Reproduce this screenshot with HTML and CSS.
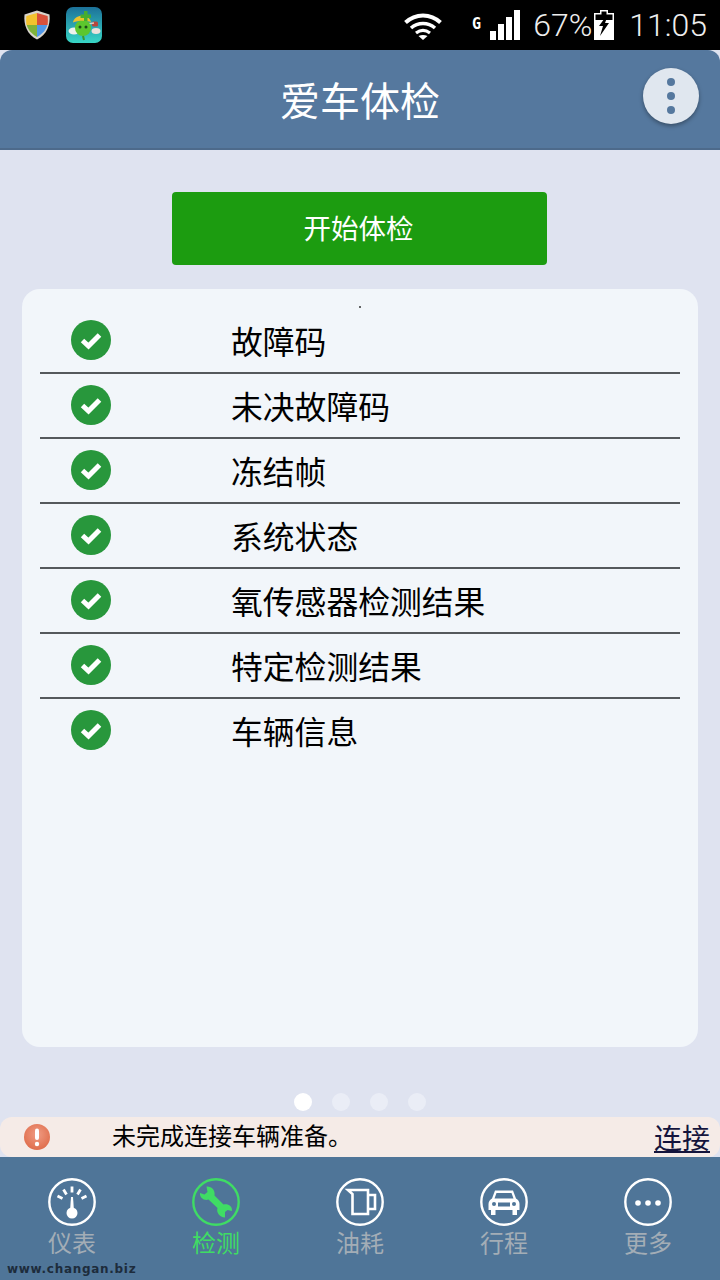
FILE: index.html
```html
<!DOCTYPE html>
<html lang="zh-CN">
<head>
    <meta charset="UTF-8">
    <meta name="viewport" content="width=device-width, initial-scale=1.0">
    <title>爱车体检</title>
    <link rel="stylesheet" href="styles.css">
</head>
<body>
    <div class="phone">
        <div class="status-bar">
            <svg class="shield" width="28" height="30" viewBox="0 0 28 30">
                <path d="M14 0.5 L26.5 4.5 C27.5 15 24 24.5 14 29.5 C4 24.5 0.5 15 1.5 4.5 Z" fill="#d8d4cc"/>
                <path d="M14 3 V15 H3.4 C3 12 3 9 3.4 6 Z" fill="#f3c22e"/>
                <path d="M14 3 V15 H24.6 C25 12 25 9 24.6 6 Z" fill="#d9503a"/>
                <path d="M14 15 V27 C8 23.5 4.8 19.5 3.8 15 Z" fill="#7fb23a"/>
                <path d="M14 15 V27 C20 23.5 23.2 19.5 24.2 15 Z" fill="#4f97e8"/>
            </svg>
            <svg class="app-icon" width="36" height="36" viewBox="0 0 36 36">
                <defs>
                    <linearGradient id="appBg" x1="0" y1="0" x2="0" y2="1">
                        <stop offset="0" stop-color="#1c7199"/>
                        <stop offset="1" stop-color="#38d6c6"/>
                    </linearGradient>
                </defs>
                <rect width="36" height="36" rx="7" fill="url(#appBg)"/>
                <ellipse cx="8" cy="24" rx="5.5" ry="3.5" fill="#eef2ec"/>
                <ellipse cx="30" cy="24" rx="4.5" ry="3" fill="#ece2dc"/>
                <rect x="26" y="14.5" width="6" height="5" rx="1.5" fill="#b8453c"/>
                <path d="M21 17 L28 16" stroke="#d8d0c0" stroke-width="1.5"/>
                <circle cx="17" cy="21" r="8" fill="#5cc62e"/>
                <path d="M17 29 L18 33" stroke="#3c9a2a" stroke-width="2"/>
                <path d="M7 15.5 C8 7 23 6 25 15 C19 13 12 13.5 7 15.5 Z" fill="#ecc22c"/>
                <path d="M18 4 h3.5 v3.5 h3.5 v3.5 h-3.5 v3 h-3.5 v-3 h-3.5 v-3.5 h3.5 Z" fill="#46ad2e"/>
                <circle cx="14" cy="20" r="1.5" fill="#1c4a18"/>
                <circle cx="20" cy="20" r="1.5" fill="#1c4a18"/>
            </svg>
            <div class="status-right">
                <svg class="wifi" width="38" height="27" viewBox="0 0 38 27">
                    <path d="M1.5 9.5 C11.5 0 26.5 0 36.5 9.5" fill="none" stroke="#fff" stroke-width="4"/>
                    <path d="M7 15 C14 9 24 9 31 15" fill="none" stroke="#fff" stroke-width="3.6"/>
                    <path d="M12 20 C16.5 16.5 21.5 16.5 26 20" fill="none" stroke="#fff" stroke-width="3.2"/>
                    <path d="M14.5 23 L19 27 L23.5 23 C20.5 21.5 17.5 21.5 14.5 23 Z" fill="#fff"/>
                </svg>
                <span class="net-type">G</span>
                <div class="signal">
                    <i class="s1"></i><i class="s2"></i><i class="s3"></i><i class="s4"></i>
                </div>
                <span class="battery-text">67%</span>
                <svg class="battery" width="20" height="30" viewBox="0 0 20 30">
                    <path d="M6 0 H14 V3 H20 V30 H0 V3 H6 Z M7.5 1.5 V4.5 H1.5 V10 H18.5 V4.5 H12.5 V1.5 Z" fill="#fff" fill-rule="evenodd"/>
                    <path d="M13 5 L5 16 H9 L6 26 L15 13 H11 L14 5 Z" fill="#000"/>
                </svg>
                <span class="clock">11:05</span>
            </div>
        </div>

        <header class="title-bar">
            <h1>爱车体检</h1>
            <div class="menu-btn"><i></i><i></i><i></i></div>
        </header>

        <main class="content">
            <div class="start-row">
                <button class="start-btn" type="button">开始体检</button>
            </div>
            <div class="check-card">
                <i class="speck"></i>
                <div class="check-item"><span class="check"><svg width="40" height="40" viewBox="0 0 40 40"><circle cx="20" cy="20" r="20" fill="#28973c"/><path d="M11.5 20.5 L17.5 26 L28.5 15" fill="none" stroke="#fff" stroke-width="5"/></svg></span><span class="check-label">故障码</span></div>
                <div class="check-item"><span class="check"><svg width="40" height="40" viewBox="0 0 40 40"><circle cx="20" cy="20" r="20" fill="#28973c"/><path d="M11.5 20.5 L17.5 26 L28.5 15" fill="none" stroke="#fff" stroke-width="5"/></svg></span><span class="check-label">未决故障码</span></div>
                <div class="check-item"><span class="check"><svg width="40" height="40" viewBox="0 0 40 40"><circle cx="20" cy="20" r="20" fill="#28973c"/><path d="M11.5 20.5 L17.5 26 L28.5 15" fill="none" stroke="#fff" stroke-width="5"/></svg></span><span class="check-label">冻结帧</span></div>
                <div class="check-item"><span class="check"><svg width="40" height="40" viewBox="0 0 40 40"><circle cx="20" cy="20" r="20" fill="#28973c"/><path d="M11.5 20.5 L17.5 26 L28.5 15" fill="none" stroke="#fff" stroke-width="5"/></svg></span><span class="check-label">系统状态</span></div>
                <div class="check-item"><span class="check"><svg width="40" height="40" viewBox="0 0 40 40"><circle cx="20" cy="20" r="20" fill="#28973c"/><path d="M11.5 20.5 L17.5 26 L28.5 15" fill="none" stroke="#fff" stroke-width="5"/></svg></span><span class="check-label">氧传感器检测结果</span></div>
                <div class="check-item"><span class="check"><svg width="40" height="40" viewBox="0 0 40 40"><circle cx="20" cy="20" r="20" fill="#28973c"/><path d="M11.5 20.5 L17.5 26 L28.5 15" fill="none" stroke="#fff" stroke-width="5"/></svg></span><span class="check-label">特定检测结果</span></div>
                <div class="check-item last"><span class="check"><svg width="40" height="40" viewBox="0 0 40 40"><circle cx="20" cy="20" r="20" fill="#28973c"/><path d="M11.5 20.5 L17.5 26 L28.5 15" fill="none" stroke="#fff" stroke-width="5"/></svg></span><span class="check-label">车辆信息</span></div>
            </div>
            <div class="pager">
                <i class="active"></i><i></i><i></i><i></i>
            </div>
        </main>

        <div class="notice">
            <svg class="notice-icon" width="26" height="26" viewBox="0 0 26 26">
                <defs>
                    <radialGradient id="noticeBg" cx="0.5" cy="0.4" r="0.65">
                        <stop offset="0" stop-color="#f09c84"/>
                        <stop offset="1" stop-color="#de6a48"/>
                    </radialGradient>
                </defs>
                <circle cx="13" cy="13" r="13" fill="url(#noticeBg)"/>
                <rect x="11" y="4.5" width="4" height="11.5" rx="2" fill="#fff"/>
                <circle cx="13" cy="20" r="2.2" fill="#fff"/>
            </svg>
            <span class="notice-text">未完成连接车辆准备。</span>
            <a class="notice-link">连接</a>
        </div>

        <nav class="tab-bar">
            <div class="tab">
                <svg width="48" height="48" viewBox="0 0 48 48" fill="none" stroke="#fff">
                    <circle cx="24" cy="24" r="22.7" stroke-width="2.4"/>
                    <path d="M9.5 18 L14.5 20.5 M15.5 11.5 L18.5 16.5 M24 8.5 V14.5 M32.5 11.5 L29.5 16.5 M38.5 18 L33.5 20.5" stroke-width="2.8"/>
                    <path d="M23 19 H25 L26 33 H22 Z" fill="#fff" stroke="none"/>
                    <circle cx="24" cy="35" r="5.5" fill="#fff" stroke="none"/>
                </svg>
                <span>仪表</span>
            </div>
            <div class="tab active">
                <svg width="48" height="48" viewBox="0 0 48 48" fill="none" stroke="#3fdc64">
                    <circle cx="24" cy="24" r="22.7" stroke-width="2.4"/>
                    <path d="M14.5 8.5 C19.5 8 23.5 12 22.5 17.5 L31.5 26.5 C36 25.5 40.5 28 40 33 L35.5 32 L33 34 L33 39.5 C27.5 39 24 34.5 25.5 30 L16.5 21.5 C12.5 23 7.5 20 8 15 L12.5 16.5 L15.5 14 Z" fill="#3fdc64" stroke="none"/>
                </svg>
                <span>检测</span>
            </div>
            <div class="tab">
                <svg width="48" height="48" viewBox="0 0 48 48" fill="none" stroke="#fff">
                    <circle cx="24" cy="24" r="22.7" stroke-width="2.4"/>
                    <path d="M12 12 H32 V36 H16.5 V16 Z" stroke-width="2.6"/>
                    <path d="M32 17 H39 V31 H32" stroke-width="2.6"/>
                </svg>
                <span>油耗</span>
            </div>
            <div class="tab">
                <svg width="48" height="48" viewBox="0 0 48 48" fill="none" stroke="#fff">
                    <circle cx="24" cy="24" r="22.7" stroke-width="2.4"/>
                    <path d="M15 12.5 H33 L36 20.5 C38 21.5 39.5 23.5 39.5 26 V32 H37 V37 H32.5 V32 H15.5 V37 H11 V32 H8.5 V26 C8.5 23.5 10 21.5 12 20.5 Z M16.5 15 L14.5 20.5 H33.5 L31.5 15 Z" fill="#fff" stroke="none" fill-rule="evenodd"/>
                    <circle cx="14" cy="26" r="2" fill="#4f7598" stroke="none"/>
                    <circle cx="34" cy="26" r="2" fill="#4f7598" stroke="none"/>
                    <rect x="18" y="24.5" width="12" height="4" fill="#4f7598" stroke="none"/>
                </svg>
                <span>行程</span>
            </div>
            <div class="tab">
                <svg width="48" height="48" viewBox="0 0 48 48" fill="none" stroke="#fff">
                    <circle cx="24" cy="24" r="22.7" stroke-width="2.4"/>
                    <circle cx="14" cy="25" r="2.8" fill="#fff" stroke="none"/>
                    <circle cx="24" cy="25" r="2.8" fill="#fff" stroke="none"/>
                    <circle cx="34" cy="25" r="2.8" fill="#fff" stroke="none"/>
                </svg>
                <span>更多</span>
            </div>
            <span class="watermark">www.changan.biz</span>
        </nav>
    </div>
</body>
</html>
```

FILE: styles.css
```css
* {
    box-sizing: border-box;
}
html, body {
    margin: 0;
    padding: 0;
}
body {
    font-family: "Noto Sans CJK SC", "Noto Sans", sans-serif;
    background-color: #000;
}
.phone {
    width: 720px;
    height: 1280px;
    display: flex;
    flex-direction: column;
    overflow: hidden;
    background: #dfe3f0;
}

/* status bar */
.status-bar {
    height: 50px;
    flex: none;
    background: #000;
    display: flex;
    align-items: center;
    padding: 0 13px 0 23px;
    color: #fff;
}
.app-icon {
    margin-left: 15px;
}
.status-right {
    margin-left: auto;
    display: flex;
    align-items: center;
}
.wifi {
    margin-right: 30px;
    margin-top: 3px;
}
.net-type {
    font-family: "DejaVu Sans Mono", monospace;
    font-weight: bold;
    font-size: 15px;
    line-height: 14px;
    align-self: flex-start;
    margin-top: 10px;
    margin-right: 9px;
}
.signal {
    display: flex;
    align-items: flex-end;
    gap: 2px;
    height: 30px;
}
.signal i {
    width: 6px;
    background: #fff;
}
.signal .s1 { height: 9px; }
.signal .s2 { height: 16px; }
.signal .s3 { height: 23px; }
.signal .s4 { height: 30px; }
.battery-text {
    font-family: Roboto, sans-serif;
    font-size: 32px;
    font-weight: 300;
    line-height: 36px;
    margin-left: 13px;
    color: #eee;
}
.battery {
    margin-left: 2px;
}
.clock {
    font-family: Roboto, sans-serif;
    font-size: 32px;
    font-weight: 300;
    line-height: 36px;
    margin-left: 15px;
    color: #eee;
}

/* title */
.title-bar {
    height: 100px;
    flex: none;
    position: relative;
    background: #55789e;
    border-bottom: 2px solid #4d6a8b;
    border-radius: 12px 12px 0 0;
    display: flex;
    align-items: center;
    justify-content: center;
}
.title-bar h1 {
    margin: 0;
    font-size: 40px;
    font-weight: 400;
    color: #fff;
    line-height: 50px;
}
.menu-btn {
    position: absolute;
    right: 21px;
    top: 18px;
    width: 56px;
    height: 56px;
    border-radius: 50%;
    background: #e0e7ef;
    box-shadow: 0 2px 4px rgba(0, 0, 0, 0.35);
    display: flex;
    flex-direction: column;
    align-items: center;
    justify-content: center;
    gap: 6px;
}
.menu-btn i {
    width: 8px;
    height: 8px;
    border-radius: 50%;
    background: #55789e;
}

/* main */
.content {
    flex: 1;
    background: #dfe3f0;
    display: flex;
    flex-direction: column;
    padding: 42px 22px 0;
    min-height: 0;
}
.start-row {
    display: flex;
    justify-content: center;
}
.start-btn {
    width: 375px;
    height: 73px;
    margin-left: -1px;
    background: #1c9c10;
    color: #fff;
    border: none;
    border-radius: 4px;
    font-family: inherit;
    font-size: 27.5px;
    padding: 0 2px 3px 0;
}
.check-card {
    margin-top: 24px;
    height: 758px;
    background: #f2f6fa;
    border-radius: 18px;
    padding: 20px 18px 0;
    position: relative;
}
.speck {
    position: absolute;
    left: 337px;
    top: 17px;
    width: 2px;
    height: 2px;
    border-radius: 50%;
    background: #333;
}
.check-item {
    height: 65px;
    border-bottom: 2px solid #55595c;
    display: flex;
    align-items: flex-start;
    padding-top: 11px;
}
.check-item.last {
    border-bottom: none;
}
.check {
    width: 40px;
    height: 40px;
    margin-left: 31px;
    flex: none;
    display: block;
}
.check-label {
    margin-left: 120px;
    font-size: 31.8px;
    line-height: 40px;
    color: #000;
}
.pager {
    display: flex;
    justify-content: center;
    gap: 20px;
    margin-top: 46px;
}
.pager i {
    width: 18px;
    height: 18px;
    border-radius: 50%;
    background: #eaedf6;
}
.pager i.active {
    background: #fff;
}

/* notice */
.notice {
    height: 40px;
    flex: none;
    background: #f5ebe7;
    border-radius: 12px;
    display: flex;
    align-items: center;
    padding: 0 10px 0 24px;
    position: relative;
}
.notice-text {
    margin-left: 62px;
    font-size: 24px;
    line-height: 36px;
    margin-bottom: 4px;
    color: #000;
}
.notice-link {
    margin-left: auto;
    font-size: 28px;
    line-height: 36px;
    color: #14143c;
    text-decoration: underline;
}

/* bottom tabs */
.tab-bar {
    height: 123px;
    flex: none;
    background: #4f7598;
    display: grid;
    grid-template-columns: repeat(5, 144px);
    padding-top: 21px;
    position: relative;
}
.tab {
    display: flex;
    flex-direction: column;
    align-items: center;
    color: #a3adb6;
    font-size: 24px;
    line-height: 32px;
}
.tab svg {
    display: block;
}
.tab.active {
    color: #3fdc64;
}
.watermark {
    position: absolute;
    left: 7px;
    bottom: 5px;
    font-family: "DejaVu Sans", sans-serif;
    font-weight: bold;
    font-size: 12px;
    line-height: 12px;
    letter-spacing: 0.7px;
    color: #1d2c3c;
}
```
